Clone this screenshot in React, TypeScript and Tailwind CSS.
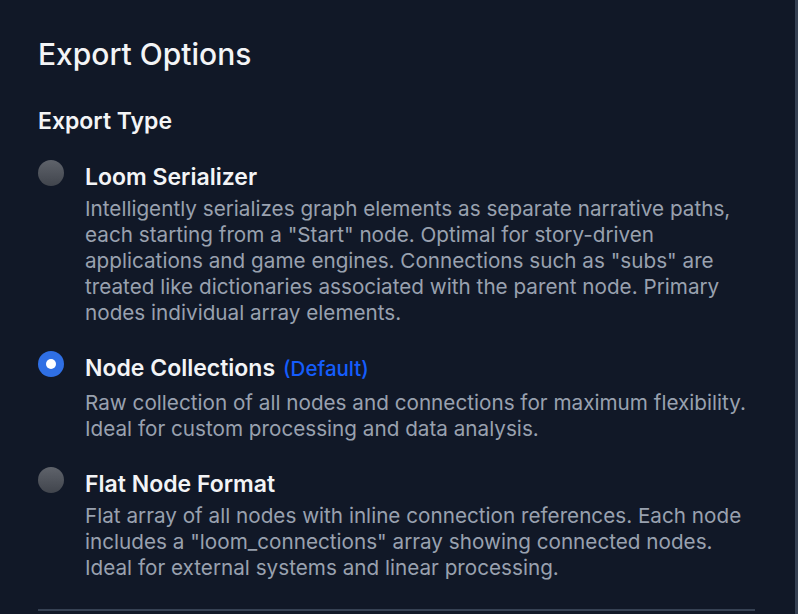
import React, { useState } from "react";

interface ExportOption {
  id: string;
  title: string;
  description: string;
  isDefault?: boolean;
}

const options: ExportOption[] = [
  {
    id: "loom",
    title: "Loom Serializer",
    description:
      'Intelligently serializes graph elements as separate narrative paths, each starting from a "Start" node. Optimal for story-driven applications and game engines. Connections such as "subs" are treated like dictionaries associated with the parent node. Primary nodes individual array elements.',
  },
  {
    id: "collections",
    title: "Node Collections",
    description:
      "Raw collection of all nodes and connections for maximum flexibility. Ideal for custom processing and data analysis.",
    isDefault: true,
  },
  {
    id: "flat",
    title: "Flat Node Format",
    description:
      'Flat array of all nodes with inline connection references. Each node includes a "loom_connections" array showing connected nodes. Ideal for external systems and linear processing.',
  },
];

const Radio: React.FC<{ checked: boolean }> = ({ checked }) =>
  checked ? (
    <div className="flex h-[26px] w-[26px] shrink-0 items-center justify-center rounded-full bg-[#2f6fe4]">
      <div className="h-[10px] w-[10px] rounded-full bg-white" />
    </div>
  ) : (
    <div className="h-[26px] w-[26px] shrink-0 rounded-full bg-linear-to-b from-[#5f636b] to-[#41454d]" />
  );

const App: React.FC = () => {
  const [selected, setSelected] = useState("collections");

  return (
    <div
      className="flex h-[614px] w-[798px] overflow-hidden bg-[#111827]"
      style={{ fontFamily: "Inter, 'Noto Sans', sans-serif" }}
    >
      <div className="flex-1 pl-[38px] pr-[40px] pt-[36px]">
        {/* Header */}
        <h2 className="text-[30px] font-medium leading-[36px] text-gray-100">Export Options</h2>

        <h3 className="mt-[34px] text-[23px] font-semibold leading-[30px] text-gray-100">Export Type</h3>

        {/* Options */}
        <div className="mt-[27px] flex flex-col gap-[28px]">
          {options.map((opt) => (
            <label
              key={opt.id}
              className="flex cursor-pointer items-start gap-[21px]"
              onClick={() => setSelected(opt.id)}
            >
              <div className="-mt-[3px]">
                <Radio checked={selected === opt.id} />
              </div>
              <div>
                <div className="flex items-baseline gap-[8px]">
                  <span className="text-[23px] font-semibold leading-[28px] text-gray-100">{opt.title}</span>
                  {opt.isDefault && (
                    <span className="text-[20.5px] font-medium text-blue-600">(Default)</span>
                  )}
                </div>
                <p className="mt-[5px] text-[20.7px] leading-[26px] text-gray-400">{opt.description}</p>
              </div>
            </label>
          ))}
        </div>

        <div className="mt-[28px] h-[2px] bg-gray-700" />
      </div>
      <div className="w-[3px] bg-gray-700" />
    </div>
  );
};

export default App;
